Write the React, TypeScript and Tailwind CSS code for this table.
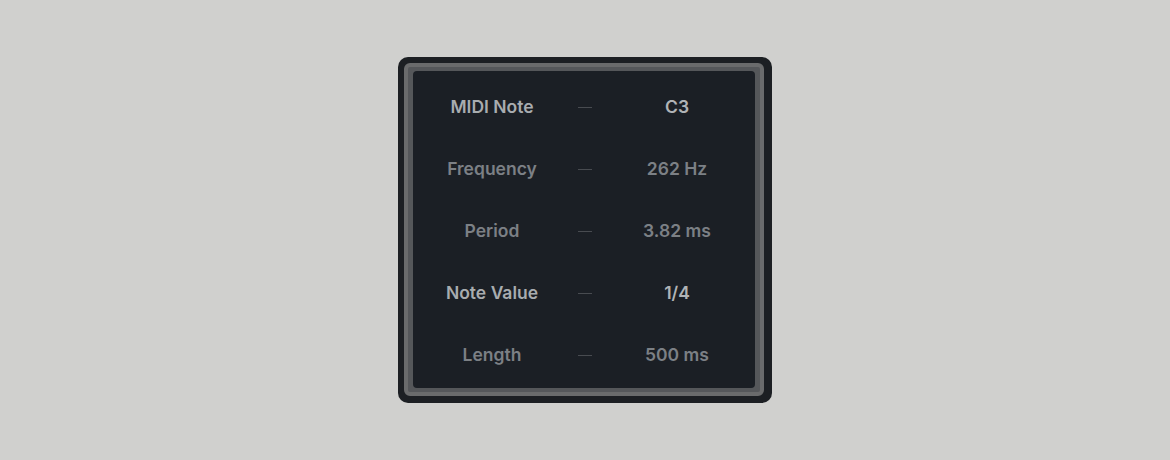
const rows = [
  { label: "MIDI Note", value: "C3", strong: true },
  { label: "Frequency", value: "262 Hz", strong: false },
  { label: "Period", value: "3.82 ms", strong: false },
  { label: "Note Value", value: "1/4", strong: true },
  { label: "Length", value: "500 ms", strong: false },
];

export default function App() {
  return (
    <div
      className="flex h-[460px] w-full items-start justify-center bg-[#d0d0ce] pt-[57px]"
      style={{ fontFamily: "Inter, 'Noto Sans', sans-serif" }}
    >
      <div className="rounded-[10px] bg-[#1c1f23] pt-[6px] pr-[8px] pb-[7px] pl-[6px]">
        <div className="rounded-[6px] border-4 border-[#6a6b6c] bg-[#55575a] px-[5px] py-[4px]">
          <div className="flex h-[317px] w-[342px] flex-col rounded-[4px] bg-[#1b1f25] pt-[5px]">
            {rows.map((row) => (
              <div
                key={row.label}
                className="grid h-[62px] shrink-0 grid-cols-[158px_28px_156px] items-center text-[17.5px] font-semibold"
              >
                <span
                  className={`text-center ${
                    row.strong ? "text-[#a8acaf]" : "text-[#7c8085]"
                  }`}
                >
                  {row.label}
                </span>
                <span className="flex justify-center">
                  <span className="h-px w-[14px] bg-[#484b50]" />
                </span>
                <span
                  className={`text-center ${
                    row.strong ? "text-[#b0b3b6]" : "text-[#7c8085]"
                  }`}
                >
                  {row.value}
                </span>
              </div>
            ))}
          </div>
        </div>
      </div>
    </div>
  );
}
